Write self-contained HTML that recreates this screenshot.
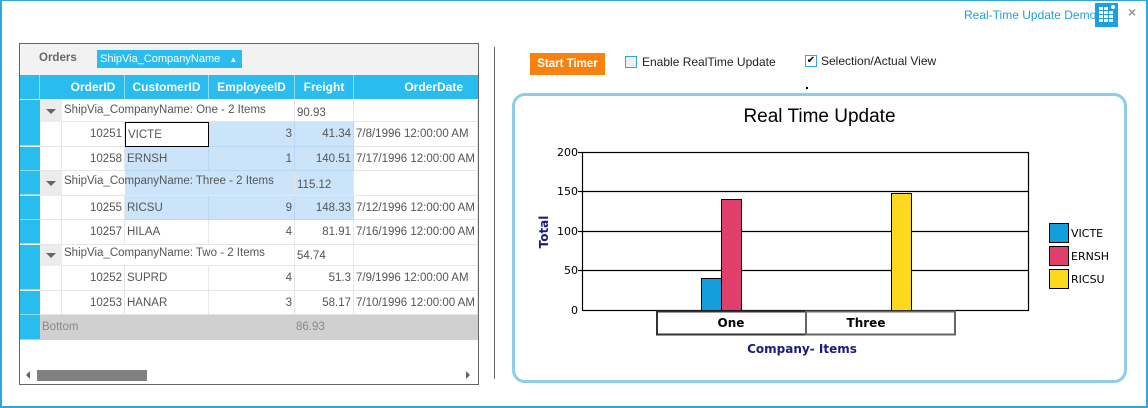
<!DOCTYPE html>
<html><head><meta charset="utf-8"><style>
*{box-sizing:border-box;margin:0;padding:0}
body{width:1148px;height:408px;background:#fff;position:relative;overflow:hidden;font-family:"Liberation Sans",sans-serif;font-size:11.5px;color:#555}
.a{position:absolute;white-space:nowrap}
.cell{position:absolute;height:24px;line-height:24px;border-right:1px solid #e6e6e6;border-bottom:1px solid #e6e6e6;padding:0 2px;overflow:hidden;white-space:nowrap}
.r{text-align:right}
.sel{background:#cce4f9;border-color:#b9d8f4}
.hd{position:absolute;top:75px;height:24px;line-height:24px;color:#fff;font-weight:bold;text-align:center;border-right:1px solid #8fdcf6;background:#29bdef;font-size:12px}
.ind{position:absolute;left:20px;width:20px;height:24px;background:#29bdef;border-bottom:1px solid #8fdcf6}
.tri{position:absolute;left:46px;width:0;height:0;border-left:5px solid transparent;border-right:5px solid transparent;border-top:5px solid #666}
</style></head><body>
<div class="a" style="left:0;top:0;width:1148px;height:408px;border:2px solid #2fa6dd;border-top:1px solid #2fa6dd;border-bottom:2px solid #2fa6dd"></div>
<div class="a" style="left:964px;top:8px;color:#1ba1e2;font-size:12px">Real-Time Update Demo</div>
<div class="a" style="left:1095px;top:3px;width:23px;height:24px;background:#1ba1e2"></div>
<svg class="a" style="left:1095px;top:3px" width="23" height="24"><g fill="#fff"><rect x="4" y="8" width="4" height="3"/><rect x="9" y="8" width="4" height="3"/><rect x="14" y="8" width="4" height="3"/><rect x="4" y="12" width="4" height="3"/><rect x="9" y="12" width="4" height="3"/><rect x="14" y="12" width="4" height="3"/><rect x="4" y="16" width="4" height="3"/><rect x="9" y="16" width="4" height="3"/><rect x="14" y="16" width="4" height="3"/><rect x="4" y="4" width="4" height="3"/><rect x="9" y="4" width="4" height="3"/><circle cx="18" cy="4" r="2"/></g></svg>
<div class="a" style="left:1128px;top:4px;color:#999;font-size:14px;font-weight:bold">×</div>

<div class="a" style="left:19px;top:43px;width:460px;height:342px;border:1px solid #666;background:#fff"></div>
<div class="a" style="left:20px;top:44px;width:458px;height:31px;background:#f2f2f2"></div>
<div class="a" style="left:39px;top:52px;font-weight:bold;color:#666">Orders</div>
<div class="a" style="left:97px;top:50px;width:145px;height:18px;background:#29bdef;color:#fff;line-height:18px;padding-left:3px;font-size:11px">ShipVia_CompanyName <span style="font-size:8px;margin-left:6px">▲</span></div>
<div class="hd" style="left:20px;width:20px"></div>
<div class="hd" style="left:40px;width:85px;padding-left:22px">OrderID</div>
<div class="hd" style="left:125px;width:84px">CustomerID</div>
<div class="hd" style="left:209px;width:86px">EmployeeID</div>
<div class="hd" style="left:295px;width:59px">Freight</div>
<div class="hd" style="left:354px;width:124px;text-align:right;padding-right:15px;border:none">OrderDate</div>

<div class="ind" style="top:100px"></div><div class="ind" style="top:122px"></div><div class="ind" style="top:147px"></div><div class="ind" style="top:171px"></div><div class="ind" style="top:196px"></div><div class="ind" style="top:220px"></div><div class="ind" style="top:245px"></div><div class="ind" style="top:266px"></div><div class="ind" style="top:291px"></div><div class="ind" style="top:315px;height:25px"></div>

<div class="cell" style="left:40px;top:100px;width:22px;height:22px;background:#ececec;border:none"></div><div class="tri" style="top:109px"></div>
<div class="cell" style="left:62px;top:100px;width:233px;height:22px;line-height:20px">ShipVia_CompanyName: One - 2 Items</div>
<div class="cell" style="left:295px;top:100px;width:59px;height:22px;line-height:26px">90.93</div>
<div class="cell" style="left:354px;top:100px;width:124px;height:22px"></div>
<div class="cell" style="left:40px;top:122px;width:22px;height:25px"></div>
<div class="cell r" style="left:62px;top:122px;width:63px;height:25px">10251</div>
<div class="cell" style="left:125px;top:122px;width:84px;height:25px;border:1px solid #000">VICTE</div>
<div class="cell r sel" style="left:209px;top:122px;width:86px;height:25px">3</div>
<div class="cell r sel" style="left:295px;top:122px;width:59px;height:25px">41.34</div>
<div class="cell" style="left:354px;top:122px;width:124px;height:25px">7/8/1996 12:00:00 AM</div>
<div class="cell" style="left:40px;top:147px;width:22px"></div>
<div class="cell r" style="left:62px;top:147px;width:63px">10258</div>
<div class="cell sel" style="left:125px;top:147px;width:84px">ERNSH</div>
<div class="cell r sel" style="left:209px;top:147px;width:86px">1</div>
<div class="cell r sel" style="left:295px;top:147px;width:59px">140.51</div>
<div class="cell" style="left:354px;top:147px;width:124px">7/17/1996 12:00:00 AM</div>
<div class="cell sel" style="left:125px;top:171px;width:229px;height:25px;border:none"></div>
<div class="cell" style="left:40px;top:171px;width:22px;height:25px;background:#ececec;border:none"></div><div class="tri" style="top:181px"></div>
<div class="cell" style="left:62px;top:171px;width:233px;height:25px;line-height:20px;background:transparent">ShipVia_CompanyName: Three - 2 Items</div>
<div class="cell" style="left:295px;top:171px;width:59px;height:25px;line-height:28px">115.12</div>
<div class="cell" style="left:354px;top:171px;width:124px;height:25px"></div>
<div class="cell" style="left:40px;top:196px;width:22px"></div>
<div class="cell r" style="left:62px;top:196px;width:63px">10255</div>
<div class="cell sel" style="left:125px;top:196px;width:84px">RICSU</div>
<div class="cell r sel" style="left:209px;top:196px;width:86px">9</div>
<div class="cell r sel" style="left:295px;top:196px;width:59px">148.33</div>
<div class="cell" style="left:354px;top:196px;width:124px">7/12/1996 12:00:00 AM</div>
<div class="cell" style="left:40px;top:220px;width:22px;height:25px"></div>
<div class="cell r" style="left:62px;top:220px;width:63px;height:25px">10257</div>
<div class="cell" style="left:125px;top:220px;width:84px;height:25px">HILAA</div>
<div class="cell r" style="left:209px;top:220px;width:86px;height:25px">4</div>
<div class="cell r" style="left:295px;top:220px;width:59px;height:25px">81.91</div>
<div class="cell" style="left:354px;top:220px;width:124px;height:25px">7/16/1996 12:00:00 AM</div>
<div class="cell" style="left:40px;top:245px;width:22px;height:21px;background:#ececec;border:none"></div><div class="tri" style="top:253px"></div>
<div class="cell" style="left:62px;top:245px;width:233px;height:21px;line-height:16px">ShipVia_CompanyName: Two - 2 Items</div>
<div class="cell" style="left:295px;top:245px;width:59px;height:21px;line-height:22px">54.74</div>
<div class="cell" style="left:354px;top:245px;width:124px;height:21px"></div>
<div class="cell" style="left:40px;top:266px;width:22px;height:25px"></div>
<div class="cell r" style="left:62px;top:266px;width:63px;height:25px">10252</div>
<div class="cell" style="left:125px;top:266px;width:84px;height:25px">SUPRD</div>
<div class="cell r" style="left:209px;top:266px;width:86px;height:25px">4</div>
<div class="cell r" style="left:295px;top:266px;width:59px;height:25px">51.3</div>
<div class="cell" style="left:354px;top:266px;width:124px;height:25px">7/9/1996 12:00:00 AM</div>
<div class="cell" style="left:40px;top:291px;width:22px"></div>
<div class="cell r" style="left:62px;top:291px;width:63px">10253</div>
<div class="cell" style="left:125px;top:291px;width:84px">HANAR</div>
<div class="cell r" style="left:209px;top:291px;width:86px">3</div>
<div class="cell r" style="left:295px;top:291px;width:59px">58.17</div>
<div class="cell" style="left:354px;top:291px;width:124px">7/10/1996 12:00:00 AM</div>
<div class="a" style="left:40px;top:315px;width:438px;height:25px;background:#d0d0d0;color:#888;line-height:25px;padding-left:2px">Bottom<span style="position:absolute;left:256px">86.93</span></div>
<div class="a" style="left:26px;top:371px;width:0;height:0;border-top:4px solid transparent;border-bottom:4px solid transparent;border-right:4px solid #666"></div>
<div class="a" style="left:37px;top:370px;width:110px;height:11px;background:#808080"></div>
<div class="a" style="left:466px;top:371px;width:0;height:0;border-top:4px solid transparent;border-bottom:4px solid transparent;border-left:4px solid #666"></div>
<div class="a" style="left:494px;top:47px;width:1px;height:332px;background:#666"></div>

<div class="a" style="left:530px;top:53px;width:75px;height:22px;background:#f7820f;color:#fff;font-weight:bold;text-align:center;line-height:22px;font-size:11.5px">Start Timer</div>
<div class="a" style="left:625px;top:56px;width:12px;height:12px;border:1px solid #2fa6dd;background:#eee"></div>
<div class="a" style="left:642px;top:55px;color:#222;font-size:12px">Enable RealTime Update</div>
<div class="a" style="left:805px;top:55px;width:12px;height:12px;border:1px solid #2fa6dd;background:#fff;font-size:10px;line-height:10px;color:#000;text-align:center">✔</div>
<div class="a" style="left:821px;top:54px;color:#222;font-size:12px">Selection/Actual View</div>
<div class="a" style="left:806px;top:87px;width:2px;height:2px;background:#000"></div>

<div class="a" style="left:512px;top:93px;width:615px;height:290px;border:3px solid #8ecdea;border-radius:13px"></div>
<div class="a" style="left:512px;top:106px;width:615px;text-align:center;color:#000;font-size:19px">Real Time Update</div>
<svg class="a" style="left:0;top:0" width="1148" height="408" font-family="DejaVu Sans,Verdana,sans-serif">
<g stroke="#000" stroke-width="1.2" fill="none">
<rect x="582.5" y="152.5" width="446" height="158"/>
<line x1="582" y1="191.5" x2="1029" y2="191.5"/><line x1="582" y1="231.5" x2="1029" y2="231.5"/><line x1="582" y1="270.5" x2="1029" y2="270.5"/>
<line x1="578" y1="152.5" x2="582" y2="152.5"/><line x1="578" y1="191.5" x2="582" y2="191.5"/><line x1="578" y1="231.5" x2="582" y2="231.5"/><line x1="578" y1="270.5" x2="582" y2="270.5"/>
</g>
<g font-size="11" fill="#000" text-anchor="end"><text x="578" y="156">200</text><text x="578" y="195">150</text><text x="578" y="235">100</text><text x="578" y="274">50</text><text x="578" y="314">0</text></g>
<rect x="701.5" y="278.5" width="20" height="32" fill="#139fdb" stroke="#000"/>
<rect x="721.5" y="199.5" width="20" height="111" fill="#df3f6a" stroke="#000"/>
<rect x="891.5" y="193.5" width="20" height="117" fill="#fcd91e" stroke="#000"/>
<rect x="657" y="311.5" width="149" height="23" fill="#fff" stroke="#333" stroke-width="2"/>
<rect x="806" y="311.5" width="149" height="23" fill="#fff" stroke="#666" stroke-width="2"/>
<g font-weight="bold" font-size="12" fill="#000" text-anchor="middle"><text x="731" y="327">One</text><text x="866" y="327">Three</text></g>
<text x="802" y="353" font-weight="bold" font-size="12" fill="#1a1a80" text-anchor="middle">Company- Items</text>
<text transform="translate(548,232) rotate(-90)" font-weight="bold" font-size="12" fill="#1a1a80" text-anchor="middle">Total</text>
<rect x="1049.5" y="223.5" width="19" height="19" fill="#139fdb" stroke="#000"/>
<rect x="1049.5" y="246.5" width="19" height="19" fill="#df3f6a" stroke="#000"/>
<rect x="1049.5" y="269.5" width="19" height="19" fill="#fcd91e" stroke="#000"/>
<g font-size="11" fill="#000"><text x="1071" y="237">VICTE</text><text x="1071" y="260">ERNSH</text><text x="1071" y="283">RICSU</text></g>
</svg>
</body></html>
